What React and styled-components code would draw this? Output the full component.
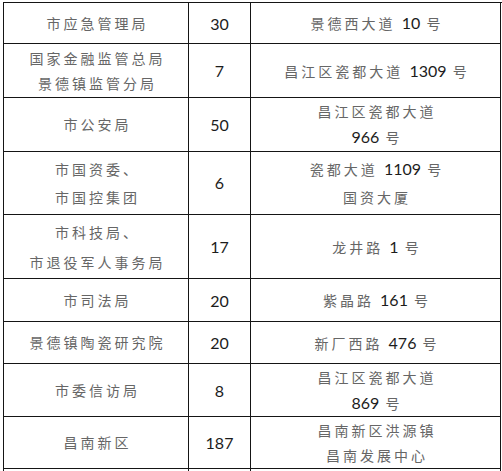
import styled, { createGlobalStyle } from "styled-components";

const GlobalStyle = createGlobalStyle`
  html, body {
    margin: 0;
    padding: 0;
    background: #fff;
    overflow: hidden;
  }
  body {
    font-family: "Noto Sans CJK SC", "Liberation Sans", sans-serif;
  }
`;

const Page = styled.div`
  box-sizing: border-box;
  width: 502px;
  height: 471px;
  padding: 2px 0 0 3px;
  overflow: hidden;
`;

const Table = styled.div`
  display: flex;
  flex-direction: column;
  width: 498px;
  border-top: 1px solid #151515;
  border-left: 1px solid #151515;
`;

const Row = styled.div`
  display: grid;
  grid-template-columns: 185px 62px 250px;
  height: ${(p) => p.$h}px;
  flex-shrink: 0;
`;

const Cell = styled.div`
  box-sizing: border-box;
  display: flex;
  flex-direction: column;
  align-items: center;
  justify-content: center;
  border-right: 1px solid #151515;
  border-bottom: 1px solid #151515;
  padding-left: 3px;
  color: #666;
  font-size: 14px;
  letter-spacing: 3px;
  line-height: ${(p) => p.$lh || 25}px;
  white-space: nowrap;
`;

const CountCell = styled(Cell)`
  padding-left: 0;
  letter-spacing: 0;
`;

const Line = styled.div``;

const Num = styled.span`
  font-family: "Lato", "Liberation Sans", sans-serif;
  font-size: 16px;
  letter-spacing: 0;
  color: #1c1c1c;
`;

const withNums = (text) =>
  text.split(/(\d+)/).map((part, i) =>
    /^\d+$/.test(part) ? <Num key={i}>{part}</Num> : part
  );

const rows = [
  { h: 41, name: ["市应急管理局"], count: "30", addr: ["景德西大道 10 号"] },
  {
    h: 54,
    name: ["国家金融监管总局", "景德镇监管分局"],
    count: "7",
    addr: ["昌江区瓷都大道 1309 号"],
  },
  {
    h: 54,
    name: ["市公安局"],
    count: "50",
    addr: ["昌江区瓷都大道", "966 号"],
  },
  {
    h: 63,
    lh: 28,
    name: ["市国资委、", "市国控集团"],
    count: "6",
    addr: ["瓷都大道 1109 号", "国资大厦"],
  },
  {
    h: 64,
    lh: 30,
    name: ["市科技局、", "市退役军人事务局"],
    count: "17",
    addr: ["龙井路 1 号"],
  },
  { h: 43, name: ["市司法局"], count: "20", addr: ["紫晶路 161 号"] },
  { h: 42, name: ["景德镇陶瓷研究院"], count: "20", addr: ["新厂西路 476 号"] },
  {
    h: 53,
    name: ["市委信访局"],
    count: "8",
    addr: ["昌江区瓷都大道", "869 号"],
  },
  {
    h: 52,
    name: ["昌南新区"],
    count: "187",
    addr: ["昌南新区洪源镇", "昌南发展中心"],
  },
  // next row only starts at the bottom edge of the picture
  { h: 52, name: [], count: "", addr: [] },
];

export default function App() {
  return (
    <Page>
      <GlobalStyle />
      <Table>
        {rows.map((r, i) => (
          <Row key={i} $h={r.h}>
            <Cell $lh={r.lh}>
              {r.name.map((t, j) => (
                <Line key={j}>{t}</Line>
              ))}
            </Cell>
            <CountCell $lh={r.lh}>
              {r.count && <Num>{r.count}</Num>}
            </CountCell>
            <Cell $lh={r.lh}>
              {r.addr.map((t, j) => (
                <Line key={j}>{withNums(t)}</Line>
              ))}
            </Cell>
          </Row>
        ))}
      </Table>
    </Page>
  );
}
